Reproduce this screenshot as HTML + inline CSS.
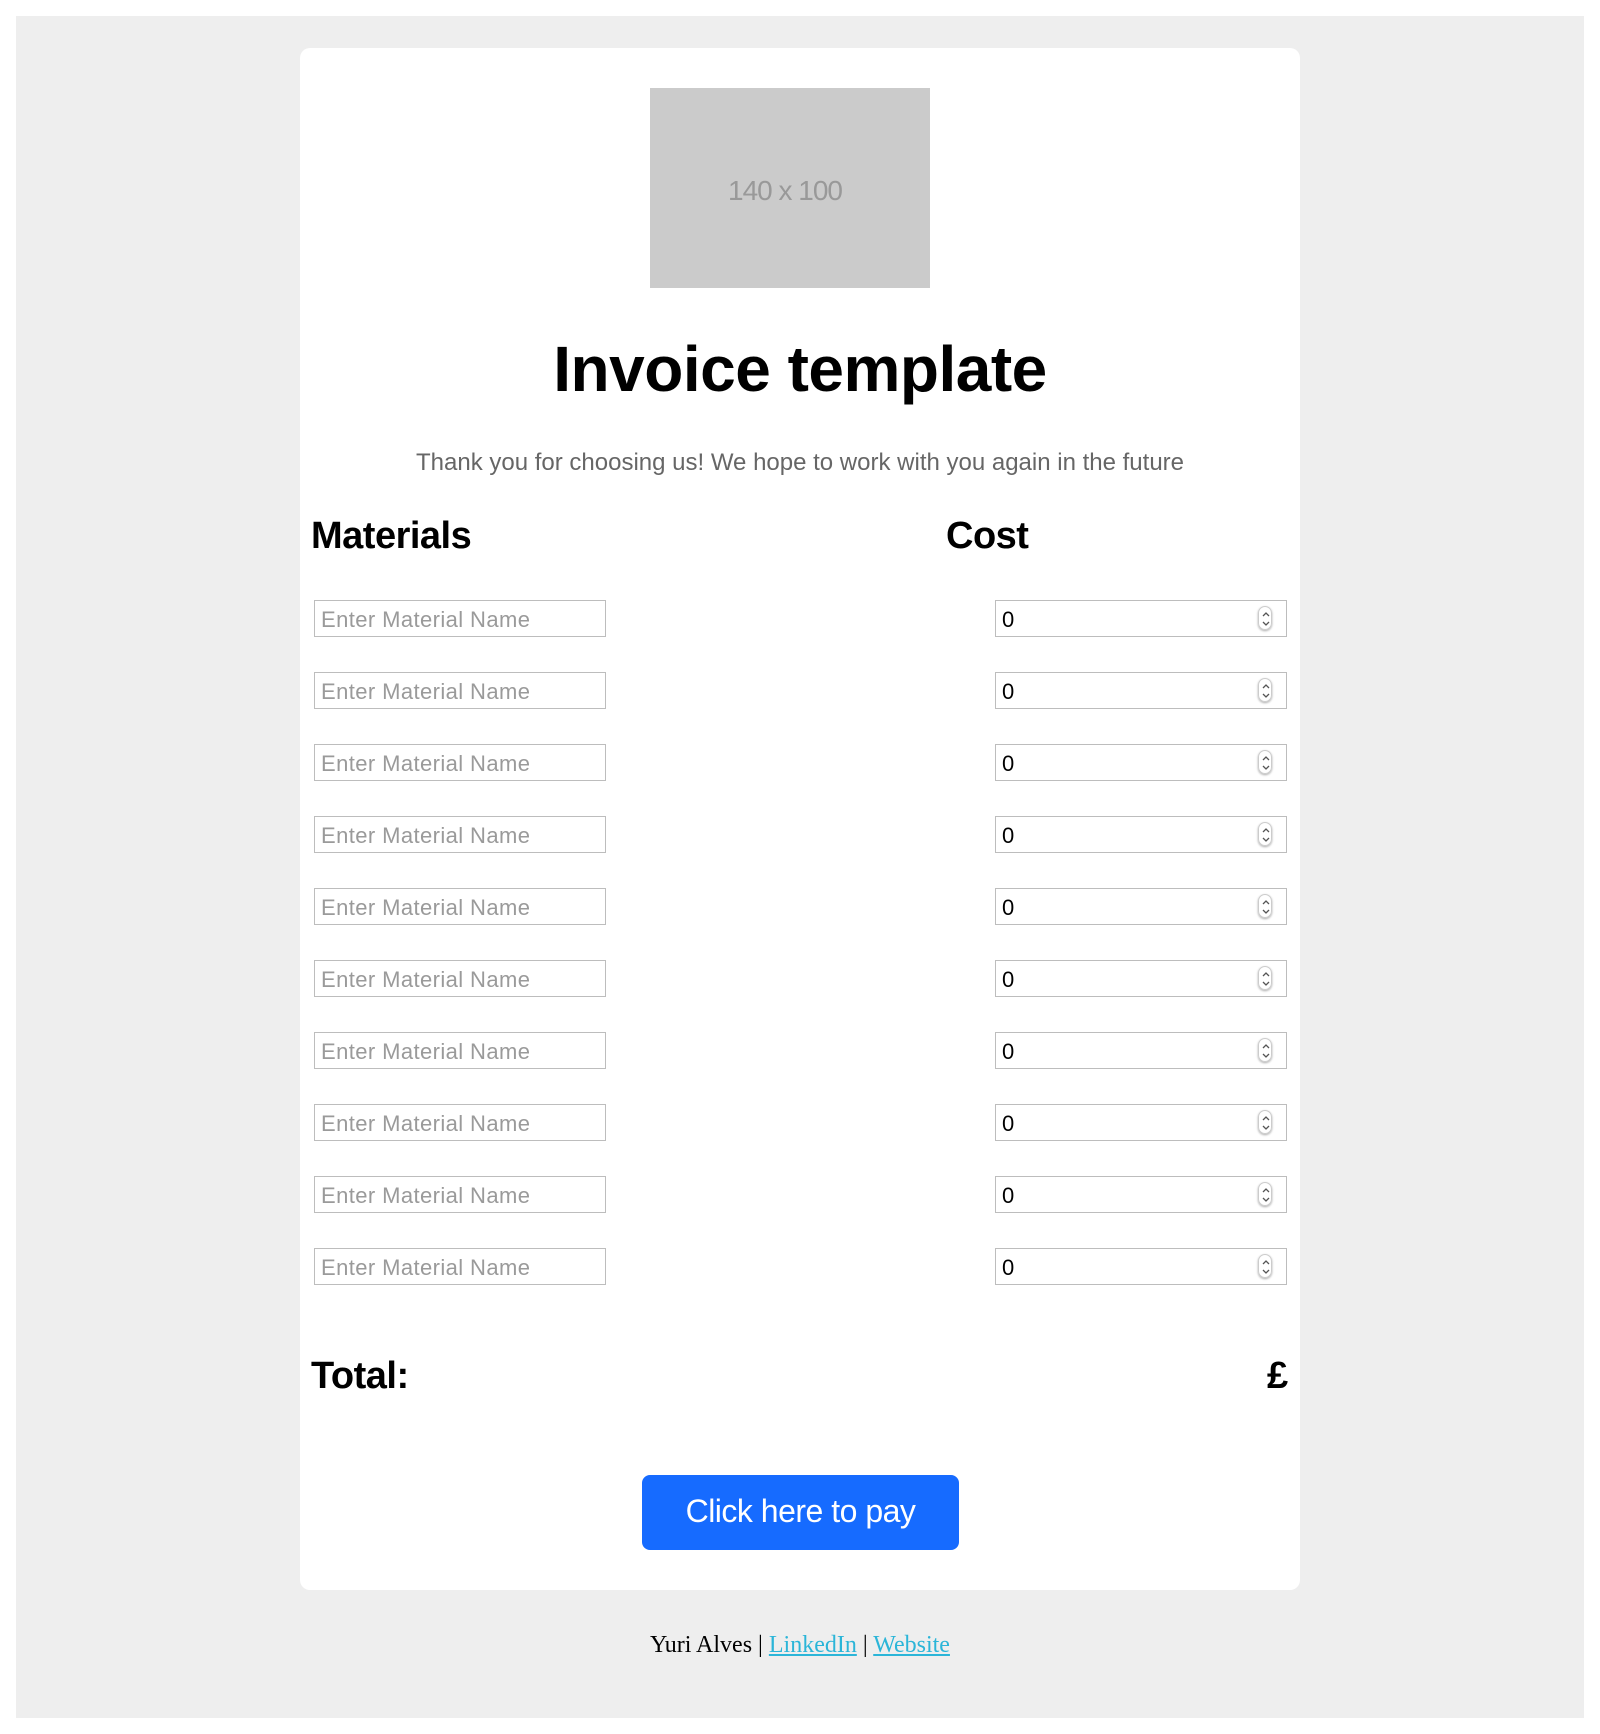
<!DOCTYPE html>
<html><head><style>
*{box-sizing:border-box}
body{margin:0;width:1600px;height:1734px;background:#fff;position:relative;font-family:"Liberation Sans",Arial,sans-serif;overflow:hidden}
.bg{position:absolute;left:16px;top:16px;width:1568px;height:1702px;background:#eee}
.card{position:absolute;left:300px;top:48px;width:1000px;height:1542px;background:#fff;border-radius:10px}
.ph{position:absolute;left:650px;top:88px;width:280px;height:200px;background:#cbcbcb;color:#999;font-size:28px;display:flex;align-items:center;justify-content:center;padding-right:10px;padding-top:6px;letter-spacing:-1px}
.t{position:absolute;left:0;width:1600px;text-align:center}
.h{position:absolute;font-weight:bold;font-size:38px;color:#000;letter-spacing:-0.5px}
.in{position:absolute;height:37px;border:1.5px solid #bdbdbd;background:#fff;font-size:22px;line-height:38px;padding-left:6px}
.l{left:314px;width:292px;color:#9a9a9a;letter-spacing:0.4px}
.r{left:995px;width:292px;color:#000}
.sp{position:absolute;right:14px;top:5px;width:14px;height:24px;border-radius:7px;border:1px solid #ccc;box-shadow:0 1px 2px #aaa}
.sp svg{position:absolute;left:2px;top:3px}
.btn{position:absolute;left:642px;top:1475px;width:317px;height:75px;background:#166bff;border-radius:8px;color:#fff;font-size:32px;text-align:center;line-height:72px;letter-spacing:-0.5px}
.ft{position:absolute;top:1632px;left:0;width:1600px;text-align:center;font-family:"Liberation Serif",serif;font-size:24px;color:#000}
.ft a{color:#2bb5d8;text-decoration:underline}
</style></head><body>
<div class="bg"></div>
<div class="card"></div>
<div class="ph">140 x 100</div>
<div class="t" style="top:332px;font-size:64px;font-weight:bold;letter-spacing:-0.5px">Invoice template</div>
<div class="t" style="top:449px;font-size:24px;color:#666">Thank you for choosing us! We hope to work with you again in the future</div>
<div class="h" style="left:311px;top:515px">Materials</div>
<div class="h" style="left:946px;top:515px">Cost</div>

<div class="in l" style="top:600px">Enter Material Name</div><div class="in r" style="top:600px">0<span class="sp"><svg width="10" height="18"><path d="M2 6 L5 3 L8 6 M2 12 L5 15 L8 12" stroke="#555" stroke-width="1.3" fill="none"/></svg></span></div>
<div class="in l" style="top:672px">Enter Material Name</div><div class="in r" style="top:672px">0<span class="sp"><svg width="10" height="18"><path d="M2 6 L5 3 L8 6 M2 12 L5 15 L8 12" stroke="#555" stroke-width="1.3" fill="none"/></svg></span></div>
<div class="in l" style="top:744px">Enter Material Name</div><div class="in r" style="top:744px">0<span class="sp"><svg width="10" height="18"><path d="M2 6 L5 3 L8 6 M2 12 L5 15 L8 12" stroke="#555" stroke-width="1.3" fill="none"/></svg></span></div>
<div class="in l" style="top:816px">Enter Material Name</div><div class="in r" style="top:816px">0<span class="sp"><svg width="10" height="18"><path d="M2 6 L5 3 L8 6 M2 12 L5 15 L8 12" stroke="#555" stroke-width="1.3" fill="none"/></svg></span></div>
<div class="in l" style="top:888px">Enter Material Name</div><div class="in r" style="top:888px">0<span class="sp"><svg width="10" height="18"><path d="M2 6 L5 3 L8 6 M2 12 L5 15 L8 12" stroke="#555" stroke-width="1.3" fill="none"/></svg></span></div>
<div class="in l" style="top:960px">Enter Material Name</div><div class="in r" style="top:960px">0<span class="sp"><svg width="10" height="18"><path d="M2 6 L5 3 L8 6 M2 12 L5 15 L8 12" stroke="#555" stroke-width="1.3" fill="none"/></svg></span></div>
<div class="in l" style="top:1032px">Enter Material Name</div><div class="in r" style="top:1032px">0<span class="sp"><svg width="10" height="18"><path d="M2 6 L5 3 L8 6 M2 12 L5 15 L8 12" stroke="#555" stroke-width="1.3" fill="none"/></svg></span></div>
<div class="in l" style="top:1104px">Enter Material Name</div><div class="in r" style="top:1104px">0<span class="sp"><svg width="10" height="18"><path d="M2 6 L5 3 L8 6 M2 12 L5 15 L8 12" stroke="#555" stroke-width="1.3" fill="none"/></svg></span></div>
<div class="in l" style="top:1176px">Enter Material Name</div><div class="in r" style="top:1176px">0<span class="sp"><svg width="10" height="18"><path d="M2 6 L5 3 L8 6 M2 12 L5 15 L8 12" stroke="#555" stroke-width="1.3" fill="none"/></svg></span></div>
<div class="in l" style="top:1248px">Enter Material Name</div><div class="in r" style="top:1248px">0<span class="sp"><svg width="10" height="18"><path d="M2 6 L5 3 L8 6 M2 12 L5 15 L8 12" stroke="#555" stroke-width="1.3" fill="none"/></svg></span></div>

<div class="h" style="left:311px;top:1355px">Total:</div>
<div class="h" style="left:1267px;top:1355px">£</div>
<div class="btn">Click here to pay</div>
<div class="ft">Yuri Alves | <a>LinkedIn</a> | <a>Website</a></div>
</body></html>
